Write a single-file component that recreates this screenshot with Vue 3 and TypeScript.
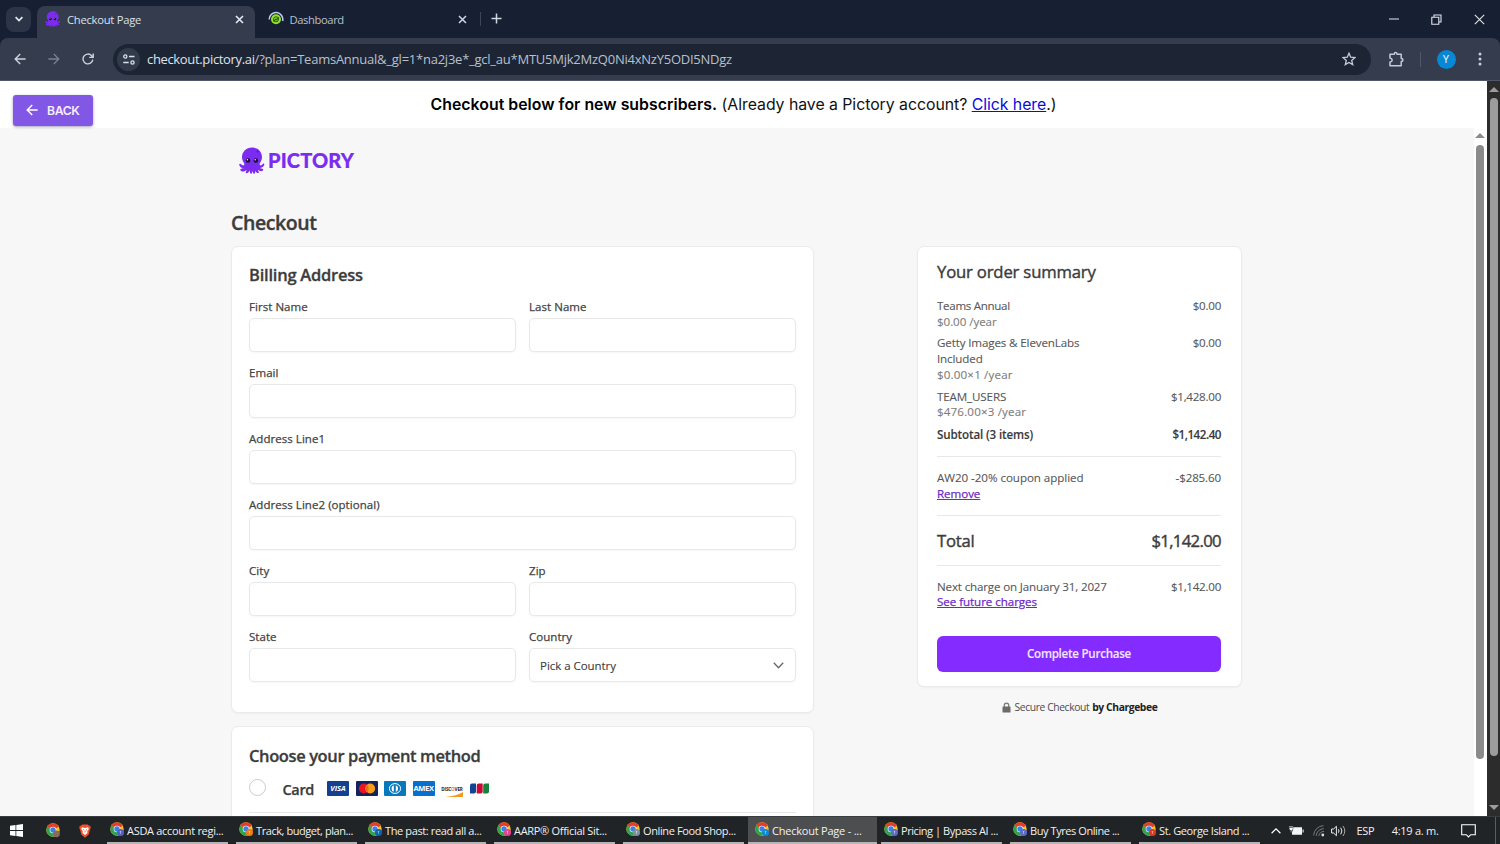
<script setup lang="ts">
interface Task { label: string; badge: string; active?: boolean }
interface Line { name: string[]; sub: string; price: string; kind: string }
interface Field { label: string; wide: boolean }

const tasks: Task[] = [
  { label: 'ASDA account regi...', badge: '#5360c4' },
  { label: 'Track, budget, plan...', badge: '#f07a1a' },
  { label: 'The past: read all a...', badge: '#0f62ae' },
  { label: 'AARP® Official Sit...', badge: '#e8408f' },
  { label: 'Online Food Shop...', badge: '#7d929e' },
  { label: 'Checkout Page - ...', badge: '#0a8bd8', active: true },
  { label: 'Pricing | Bypass AI ...', badge: '#5c6bc8' },
  { label: 'Buy Tyres Online ...', badge: '#5c6bc8' },
  { label: 'St. George Island ...', badge: '#d93a20' },
]
const lines: Line[] = [
  { name: ['Teams Annual'], sub: '$0.00 /year', price: '$0.00', kind: 'plan' },
  { name: ['Getty Images & ElevenLabs', 'Included'], sub: '$0.00×1 /year', price: '$0.00', kind: 'addon' },
  { name: ['TEAM_USERS'], sub: '$476.00×3 /year', price: '$1,428.00', kind: 'addon' },
]
const fields: Field[] = [
  { label: 'First Name', wide: false },
  { label: 'Last Name', wide: false },
  { label: 'Email', wide: true },
  { label: 'Address Line1', wide: true },
  { label: 'Address Line2 (optional)', wide: true },
  { label: 'City', wide: false },
  { label: 'Zip', wide: false },
  { label: 'State', wide: false },
]
</script>

<template>
  <div class="screen">
    <header class="tabs">
      <div class="tabmenu"><svg width="10" height="10" viewBox="0 0 10 10"><path d="M1.6 3.2 5 6.6 8.4 3.2" fill="none" stroke="#e4e8f0" stroke-width="1.7" /></svg></div>
      <div class="tab current">
        <svg class="fav" width="16" height="16" viewBox="0 0 27 27"><use href="#octo" /></svg>
        <span class="tabname one">Checkout Page</span>
        <svg class="x" width="9" height="9" viewBox="0 0 9 9"><path d="M1 1 8 8M8 1 1 8" stroke="#e6eaf2" stroke-width="1.6" /></svg>
      </div>
      <div class="tab other">
        <svg class="fav" width="16" height="16" viewBox="0 0 16 16">
          <path d="M1.2 8.6A6.8 6.8 0 1 1 14.6 10" fill="none" stroke="#bccdf4" stroke-width="1.5" />
          <circle cx="8" cy="8.3" r="5" fill="#91e02c" /><circle cx="8" cy="8.300" r="2.500" fill="none" stroke="#2c5417" stroke-width="1" /><path d="M5.300 10.200 8 8.200l.8.5 2-2.300" fill="none" stroke="#2c5417" stroke-width="1.100" />
        </svg>
        <span class="tabname two">Dashboard</span>
        <svg class="x" width="9" height="9" viewBox="0 0 9 9"><path d="M1 1 8 8M8 1 1 8" stroke="#d0d6e2" stroke-width="1.5" /></svg>
      </div>
      <i class="tabsep"></i>
      <svg class="plus" width="11" height="11" viewBox="0 0 11 11"><path d="M5.500.5v10M.5 5.500h10" stroke="#d0d6e2" stroke-width="1.500" /></svg>
      <div class="winbtns">
        <svg width="10" height="10" viewBox="0 0 10 10"><path d="M0 5h10" stroke="#a9afba" stroke-width="1.400" /></svg>
        <svg width="11" height="11" viewBox="0 0 11 11"><path d="M.8 3.200h7v7h-7zM3 3V1h7v7H8" fill="none" stroke="#e2e5eb" stroke-width="1.100" /></svg>
        <svg width="11" height="11" viewBox="0 0 11 11"><path d="M.8.8l9.400 9.400M10.200.8.8 10.200" stroke="#e2e5eb" stroke-width="1.100" /></svg>
      </div>
    </header>

    <div class="toolbar">
      <svg class="nav" width="12" height="12" viewBox="0 0 12 12"><path d="M11.600 6H1.200M6.200 1 1.200 6l5 5" fill="none" stroke="#ced4df" stroke-width="1.400" /></svg>
      <svg class="nav" width="12" height="12" viewBox="0 0 12 12"><path d="M.4 6h10.400M5.800 1l5 5-5 5" fill="none" stroke="#798191" stroke-width="1.300" /></svg>
      <svg class="nav" width="12" height="12" viewBox="0 0 12 12"><path d="M10.800 6.700A4.900 4.900 0 1 1 9.600 2.700L11 4.200M11.200.4v4H7.200" fill="none" stroke="#ced4df" stroke-width="1.400" /></svg>
      <div class="omni">
        <span class="site"><svg width="12" height="11" viewBox="0 0 12 11"><g fill="none" stroke="#dce1ea" stroke-width="1.300"><circle cx="2.300" cy="2.500" r="1.600" /><path d="M6 2.500h5.500M.3 8.500h5.400" /><circle cx="9.500" cy="8.500" r="1.600" /></g></svg></span>
        <span class="url"><b>checkout.pictory.ai</b>/?plan=TeamsAnnual&amp;_gl=1*na2j3e*_gcl_au*MTU5Mjk2MzQ0Ni4xNzY5ODI5NDgz</span>
        <svg class="star" width="14" height="14" viewBox="0 0 14 14"><path d="m7 1.200 1.700 4 4.300.4-3.300 2.800 1 4.200L7 10.400l-3.700 2.200 1-4.200L1 5.600l4.300-.4z" fill="none" stroke="#c3cada" stroke-width="1.300" /></svg>
      </div>
      <svg class="ext" width="17" height="17" viewBox="0 0 17 17"><path d="M2 3.200h4.300c0-2.200 2.700-2.200 2.700 0h4.200v4.200c2.300.1 2.300 2.900 0 3v4.400H2v-3.700c2.900-.5 2.900-3.700 0-4.200z" fill="none" stroke="#c3cada" stroke-width="1.500" stroke-linejoin="round" /></svg>
      <i class="toolsep"></i>
      <span class="avatar">Y</span>
      <svg class="dots" width="4" height="14" viewBox="0 0 4 14"><g fill="#c9cfdb"><circle cx="2" cy="2" r="1.500" /><circle cx="2" cy="7" r="1.500" /><circle cx="2" cy="12" r="1.500" /></g></svg>
    </div>

    <div class="viewport">
      <div class="page">
        <div class="notice">
          <button class="back"><svg width="12" height="12" viewBox="0 0 12 12"><path d="M11.600 6H1.200M6.200 1 1.200 6l5 5" fill="none" stroke="#fff" stroke-width="1.400" /></svg><span>BACK</span></button>
          <p><strong>Checkout below for new subscribers.</strong> <span class="ask">(Already have a Pictory account? </span><a>Click here</a><span>.)</span></p>
        </div>
        <div class="frame">
          <main>
            <div class="logo">
              <svg width="27" height="27" viewBox="0 0 27 27">
                <defs>
                  <g id="octo">
                    <path d="M13.300.6C6.700.6 3 5.200 3 10.300c0 2.900 1.500 4.700 2.200 6.300.6 1.500-.7 2.300-2.100 1.500-.9-.6-1.100-1.600-2.200-1.400-1 .3-.7 2 .3 3 .8.9 2.100 1.500 3.500 1.400-1.100.7-2.200.5-3.100 1-.8.700.1 2.100 1.500 2.300 2 .300 3.500-.600 4.500-1.500-.100 1.300-1.300 2.100-.700 3.100.8.900 2.800-.3 3.900-2.400.2 1.300 0 2.900 1.200 3.100 1.100.1 1.300-1.500 1.300-3 .6 1.400.8 3.200 2 3.100 1.100-.2.900-1.800.8-3.100 1.100 1.600 2.500 2.900 3.500 2.200.8-.7-.4-1.800-.8-3.100 1.200.900 2.700 1.700 4.300 1.200 1-.3 1.500-1.400.7-2-.8-.6-1.800-.3-2.900-1 1.600 0 3-.8 3.800-1.900.7-1 .8-2.400 0-2.600-1-.2-1.100 1-2 1.600-1.400.8-2.500-.2-1.900-1.700.7-1.600 2.200-3.400 2.200-6.200C22.900 4.800 19.300.6 13.300.6z" fill="#7b2cf0" />
                    <circle cx="9" cy="13.500" r="2.300" fill="#1c1033" /><circle cx="16.800" cy="13.500" r="2.300" fill="#1c1033" />
                    <circle cx="8.400" cy="12.800" r=".7" fill="#fff" /><circle cx="16.200" cy="12.800" r=".7" fill="#fff" />
                    <circle cx="18.500" cy="4.500" r="1" fill="#5a14bd" />
                  </g>
                </defs>
                <use href="#octo" />
              </svg>
              <span>PICTORY</span>
            </div>
            <h1>Checkout</h1>
            <div class="cols">
              <div class="left">
                <section class="card billing">
                  <h2>Billing Address</h2>
                  <div class="form">
                    <div v-for="f in fields" :key="f.label" class="field" :class="{ wide: f.wide }">
                      <label>{{ f.label }}</label><div class="input"></div>
                    </div>
                    <div class="field"><label>Country</label>
                      <div class="input select"><span>Pick a Country</span><svg width="11" height="7" viewBox="0 0 11 7"><path d="M.8.8 5.500 5.700 10.200.8" fill="none" stroke="#666" stroke-width="1.300" /></svg></div>
                    </div>
                  </div>
                </section>
                <section class="card pay">
                  <h2>Choose your payment method</h2>
                  <div class="method">
                    <i class="radio"></i><b>Card</b>
                    <div class="brands">
                      <span class="brand visa">VISA</span>
                      <span class="brand mc"><svg width="22" height="15" viewBox="0 0 22 15"><circle cx="7.800" cy="7.500" r="4.900" fill="#ea1520" /><circle cx="14.200" cy="7.500" r="4.900" fill="#f79e1b" /><path d="M11 3.800a4.900 4.900 0 0 1 0 7.400 4.900 4.900 0 0 1 0-7.400" fill="#f46a18" /></svg></span>
                      <span class="brand diners"><svg width="22" height="15" viewBox="0 0 22 15"><ellipse cx="11" cy="7.500" rx="5.600" ry="4.900" fill="none" stroke="#fff" stroke-width="1" /><path d="M9.800 4.200a3.500 3.500 0 0 0 0 6.600zM11.800 4.200a3.500 3.500 0 0 1 0 6.600z" fill="#fff" /></svg></span>
                      <span class="brand amex">AMEX</span>
                      <span class="brand disc"><span>DISC<em>O</em>VER</span><svg width="18" height="5" viewBox="0 0 18 5"><path d="M0 5Q12 4 18 0v5z" fill="#f49a24" /></svg></span>
                      <svg class="jcb" width="19" height="11" viewBox="0 0 19 11"><path d="M2 .5h4v8q0 2-2 2H0v-8q0-2 2-2" fill="#124495" /><path d="M8.700.5h4v8q0 2-2 2h-4v-8q0-2 2-2" fill="#c40c37" /><path d="M15.200.5H19v8q0 2-2 2h-3.800v-8q0-2 2-2" fill="#16833b" /></svg>
                    </div>
                  </div>
                </section>
              </div>
              <aside>
                <section class="card summary">
                  <h3>Your order summary</h3>
                  <div v-for="l in lines" :key="l.name[0]" class="line" :class="l.kind">
                    <div><div v-for="n in l.name" :key="n">{{ n }}</div><div class="sub">{{ l.sub }}</div></div>
                    <span class="amt">{{ l.price }}</span>
                  </div>
                  <div class="line subtotal"><span>Subtotal (3 items)</span><span class="amt">$1,142.40</span></div>
                  <div class="line coupon"><div><span>AW20 -20% coupon applied</span><br /><a>Remove</a></div><span class="amt">-$285.60</span></div>
                  <div class="total"><span>Total</span><span class="sum">$1,142.00</span></div>
                  <div class="line next"><div><span>Next charge on January 31, 2027</span><br /><a>See future charges</a></div><span class="amt">$1,142.00</span></div>
                  <button class="buy">Complete Purchase</button>
                </section>
                <p class="secure"><svg width="9" height="11" viewBox="0 0 9 11"><path d="M2.300 5V3.300a2.200 2.200 0 0 1 4.400 0V5" fill="none" stroke="#777" stroke-width="1.200" /><rect x=".5" y="4.500" width="8" height="6" rx=".6" fill="#6b6b6b" /></svg><span>Secure Checkout</span><b>by Chargebee</b></p>
              </aside>
            </div>
          </main>
          <div class="inner-scroll"><i class="up"></i><i class="thumb"></i></div>
        </div>
      </div>
      <div class="outer-scroll"><i class="up"></i><i class="thumb"></i><i class="down"></i></div>
    </div>

    <footer class="taskbar">
      <svg class="symbols">
        <defs>
          <g id="chrome">
            <circle cx="7" cy="7" r="6.700" fill="#f9c22e" />
            <path d="M7 7 1.200 3.650A6.700 6.700 0 0 1 12.800 3.650z" fill="#e33e2b" /><path d="M1.200 3.650A6.700 6.700 0 0 0 7 13.700L10 8.700 7 7z" fill="#2fa34f" />
            <circle cx="7" cy="7" r="3.300" fill="#fff" /><circle cx="7" cy="7" r="2.700" fill="#3f7fe8" />
          </g>
        </defs>
      </svg>
      <svg class="win" width="13" height="13" viewBox="0 0 13 13"><path d="M0 1.800 5.500 1v5H0zM6.300.9 13 0v6H6.300zM0 6.900h5.500v5L0 11.200zM6.300 6.900H13v6.100l-6.700-.9z" fill="#fff" /></svg>
      <svg class="pin" width="15" height="15" viewBox="0 0 15 15"><use href="#chrome" /><circle cx="10.500" cy="10.800" r="3.400" fill="#8a6a5c" /></svg>
      <svg class="brave" width="12" height="14" viewBox="0 0 12 14"><path d="M3.300.4h5.400l1.300 1.300h1.200l.6 2.400-.8 1.300-1.200 5L6 13.700l-3.800-3.300-1.200-5-.8-1.300L.8 1.700H2z" fill="#f0502a" /><path d="M3 3.300 6 3.900l3-.6.8 1.800-1.500 2L8.400 9 6 11 3.600 9l.1-1.900-1.500-2z" fill="#fff" /><path d="M4 5.600l1.200.5M8 5.600l-1.200.5M6 6.500v2" stroke="#f0502a" stroke-width=".8" /></svg>
      <div class="tasks">
        <div v-for="t in tasks" :key="t.label" class="task" :class="{ active: t.active }">
          <svg width="15" height="15" viewBox="0 0 15 15"><use href="#chrome" /><circle cx="10.500" cy="10.500" r="3.500" :fill="t.badge" /><path d="M9.700 9.400h1.600M10.500 9.400v2.400" stroke="#fff" stroke-opacity=".55" stroke-width=".8" /></svg>
          <span>{{ t.label }}</span>
        </div>
      </div>
      <div class="tray">
        <svg class="chev" width="10" height="6" viewBox="0 0 10 6"><path d="M.6 5.200 5 .9l4.400 4.300" fill="none" stroke="#fff" stroke-width="1.200" /></svg>
        <svg class="bat" width="15" height="10" viewBox="0 0 15 10"><path d="M3.600 1.200H13v7.600H3V5.500h.6zM13.600 3.500h1v3h-1z" fill="#f4f4f4" /><path d="M1 0v1.500M3 0v1.500" stroke="#f4f4f4" /><path d="M.2 1.500h3.900V3.300L2.600 4.600v1.600H1.700V4.600L.2 3.300z" fill="#f4f4f4" stroke="#202426" stroke-width=".4" /></svg>
        <svg class="wifi" width="12" height="12" viewBox="0 0 12 12"><g fill="none" stroke="#777a7c" stroke-width="1"><path d="M.6 10.500A10.200 10.200 0 0 1 10.500.7M3.200 10.800A7.500 7.500 0 0 1 10.800 3.700M5.800 11A5 5 0 0 1 11 6.400" /></g><circle cx="9.800" cy="10" r="1.400" fill="#ddd" /></svg>
        <svg class="vol" width="15" height="12" viewBox="0 0 15 12"><g fill="none" stroke="#eee" stroke-width="1"><path d="M.6 4h2L5.400 1.300v9.400L2.600 8h-2z" /><path d="M7.400 4.300q1.200 1.700 0 3.400M9.700 2.700q2.400 3.300 0 6.600" /><path d="M12 1q3.600 5 0 10" stroke="#aaa" /></g></svg>
        <span class="lang">ESP</span><span class="clock">4:19 a. m.</span>
        <svg class="note" width="15" height="14" viewBox="0 0 15 14"><path d="M.7.700h13.600v10H9.700L7.500 13l-2.200-2.300H.7z" fill="none" stroke="#fff" stroke-width="1.100" /></svg>
        <i class="desk"></i>
      </div>
    </footer>
  </div>
</template>

<style>
html, body { margin: 0; overflow: hidden; }
</style>

<style scoped>
* { box-sizing: border-box; }
.screen { width: 1500px; height: 844px; display: flex; flex-direction: column; overflow: hidden; font-family: "Open Sans", "Noto Sans", sans-serif; font-size: 11.5px; color: #3c3c3c; }
svg { display: block; flex: none; }
.symbols { display: none; }
p, h1, h2, h3 { margin: 0; }
button { border: 0; font: inherit; padding: 0; }

.tabs { height: 38px; flex: none; background: #171f32; display: flex; align-items: center; padding-left: 6px; }
.tabmenu { width: 25px; height: 25px; border-radius: 8px; background: #2c3447; display: grid; place-items: center; }
.tab { display: flex; align-items: center; height: 32px; align-self: flex-end; font-size: 11.2px; }
.current { width: 218px; margin-left: 6px; padding: 0 11px 0 8px; background: #343c4e; border-radius: 8px 8px 0 0; color: #dde1ea; }
.other { width: 212px; padding-left: 12.5px; color: #b9c0ce; }
.fav { margin-top: -6px; }
.tabname { flex: 1; padding-left: 6px; margin-top: -5px; white-space: nowrap; }
.one { letter-spacing: -.24px; }
.two { letter-spacing: -.38px; }
.x { margin-top: -5px; }
.tabsep { width: 1px; height: 14px; background: #3d4658; margin-left: 12.5px; }
.plus { margin-left: 10px; margin-top: -2px; }
.winbtns { margin-left: auto; display: flex; align-items: center; gap: 32px; padding-right: 15.5px; }

.toolbar { height: 43px; flex: none; background: #343c4e; border-bottom: 1px solid #50576a; border-radius: 8px 8px 0 0; box-shadow: 0 -8px 0 #171f32; clip-path: inset(0); display: flex; align-items: center; padding: 0 18px 0 14px; }
.nav { margin-right: 22px; }
.omni { width: 1258px; height: 31px; margin-left: -3px; border-radius: 16px; background: #1d2535; display: flex; align-items: center; padding: 0 15.5px 0 4px; }
.site { width: 23px; height: 23px; border-radius: 50%; background: #323b4c; display: grid; place-items: center; }
.url { flex: 1; padding-left: 7px; margin-top: -1px; font-size: 13px; letter-spacing: -.24px; color: #b9c0cc; white-space: nowrap; }
.url b { font-weight: 400; color: #dfe3ea; letter-spacing: -.34px; }
.ext { margin-left: 17px; }
.toolsep { width: 1px; height: 15px; background: #50586b; margin-left: 15px; }
.avatar { width: 19px; height: 19px; border-radius: 50%; background: #0788d5; color: #e8f4fc; margin-left: 15.5px; font: 10.5px/19px Roboto, sans-serif; text-align: center; }
.dots { margin-left: auto; }

.viewport { flex: 1; display: flex; min-height: 0; background: #171f32; }
.page { width: 1487px; display: flex; flex-direction: column; background: #fff; }
.notice { height: 47px; flex: none; position: relative; text-align: center; font: 15.85px/47px Inter, sans-serif; color: #111; }
.notice p { height: 47px; }
.notice strong { font-weight: 600; color: #000; letter-spacing: .03px; }
.notice .ask { letter-spacing: -.04px; }
.notice a { color: #0b0be0; text-decoration: underline; letter-spacing: -.05px; }
.back { position: absolute; left: 13px; top: 14px; width: 80px; height: 31px; border-radius: 3px; background: #8257e5; color: #f6f0ff; display: flex; align-items: center; gap: 9px; padding: 0 0 1px 13px; font: 600 12.2px Inter, sans-serif; letter-spacing: -.35px; box-shadow: 0 1px 3px rgba(60, 40, 110, .45); }
.frame { flex: 1; display: flex; background: #f7f7f7; min-height: 0; overflow: hidden; }
main { width: 1474px; padding: 19px 0 0 231px; }
.inner-scroll { width: 13px; background: #fff; display: flex; flex-direction: column; align-items: center; padding: 5px 1px 0 0; }
.up { border: 5px solid transparent; border-top-width: 0; border-bottom-color: #8b8b8b; }
.inner-scroll .thumb { width: 8px; height: 614px; margin-top: 7px; border-radius: 4px; background: #8b8b8b; }
.outer-scroll { width: 13px; background: #2c2c2c; display: flex; flex-direction: column; align-items: center; padding-top: 6px; }
.outer-scroll .up { border-bottom-color: #9c9c9c; }
.outer-scroll .thumb { width: 8px; height: 658px; margin-top: 6px; border-radius: 4px; background: #9c9c9c; }
.down { border: 5px solid transparent; border-bottom-width: 0; border-top-color: #9c9c9c; margin-top: 49px; }

.logo { display: flex; align-items: center; height: 27px; padding-left: 7.5px; font: 900 20px/27px Lato, sans-serif; color: #7a2df0; gap: 2.5px; letter-spacing: .12px; -webkit-text-stroke: .2px currentColor; }
h1 { font-size: 19.5px; font-weight: 600; line-height: 27px; height: 28px; margin-top: 35px; letter-spacing: -.4px; -webkit-text-stroke: .35px currentColor; }
.cols { display: flex; gap: 103px; margin-top: 9px; }
.left { width: 583px; }
.card { background: #fff; border: 1px solid #ebebeb; border-radius: 7px; box-shadow: 0 1px 2px rgba(0, 0, 0, .04); }
.billing { height: 467px; padding: 16px 17px; }
h2 { font-size: 16.5px; font-weight: 600; line-height: 24px; letter-spacing: -.23px; -webkit-text-stroke: .3px currentColor; }
.form { display: grid; grid-template-columns: 267px 267px; column-gap: 13px; grid-auto-rows: 66.15px; margin-top: 11px; }
.field { margin-top: -.5px; }
.wide { grid-column: span 2; }
label { display: block; height: 20px; line-height: 18px; font-size: 11.5px; color: #434343; letter-spacing: .05px; -webkit-text-stroke: .25px currentColor; }
.input { height: 34px; border: 1px solid #e8e8e8; border-radius: 5px; background: #fff; box-shadow: 0 1px 2px rgba(0, 0, 0, .04); }
.select { display: flex; align-items: center; justify-content: space-between; padding: 0 11px 0 10px; -webkit-text-stroke: .1px currentColor; letter-spacing: -.04px; }
.pay { height: 160px; margin-top: 13px; padding: 17px; }
.pay h2 { letter-spacing: -.39px; }
.method { display: flex; height: 44px; border-bottom: 1px solid #e6e6e6; margin-top: 1px; padding-top: 11px; }
.radio { width: 17px; height: 17px; border: 1px solid #cbcbcf; border-radius: 50%; margin-top: -1px; }
.method b { margin: 1px 0 0 16.5px; font-size: 14.5px; font-weight: 600; line-height: 18px; width: 44.5px; letter-spacing: -.35px; -webkit-text-stroke: .25px currentColor; }
.brands { display: flex; gap: 6.5px; padding-top: .6px; }
.brand { width: 22px; height: 15px; border-radius: 1px; display: flex; align-items: center; justify-content: center; color: #fff; font: 700 7.5px/15px "Open Sans", sans-serif; }
.visa { background: #134090; font-style: italic; }
.mc { background: #12235f; }
.diners { background: #0878bd; }
.amex { background: #0670cf; letter-spacing: -.3px; }
.disc { flex-direction: column; justify-content: flex-start; padding-top: 6px; font: 700 4.6px/5px "Open Sans", sans-serif; letter-spacing: -.15px; color: #222; }
.disc em { color: #ef7a1b; font-style: normal; }
.disc svg { margin-left: 3px; }
.jcb { margin-top: 2px; }

.summary { width: 325px; height: 441px; padding: 13px 20px 0 19px; font-size: 11.6px; line-height: 15.7px; color: #575757; letter-spacing: -.13px; -webkit-text-stroke: .1px currentColor; }
h3 { font-size: 16.7px; font-weight: 400; line-height: 23px; color: #3c3c3c; margin-bottom: 15px; letter-spacing: -.18px; -webkit-text-stroke: .4px currentColor; }
.line { display: flex; justify-content: space-between; margin-bottom: 6px; }
.line.plan { letter-spacing: -.32px; }
.line .amt { letter-spacing: -.26px; }
.sub { color: #7c7c7c; letter-spacing: .16px; }
.plan .sub { letter-spacing: -.06px; }
.subtotal { font-weight: 600; color: #3a3a3a; padding-bottom: 13.5px; border-bottom: 1px solid #e8e8e8; margin: 7px 0 13px; }
.subtotal .amt { letter-spacing: -.46px; }
.summary a { color: #6e2bc4; text-decoration: underline; letter-spacing: -.06px; -webkit-text-stroke: .25px currentColor; }
.coupon { padding-bottom: 13px; border-bottom: 1px solid #e8e8e8; margin: 0; letter-spacing: -.05px; }
.coupon .amt { letter-spacing: -.14px; }
.total { display: flex; justify-content: space-between; font-size: 16.7px; line-height: 49px; height: 50px; border-bottom: 1px solid #e8e8e8; margin-bottom: 13px; color: #3c3c3c; -webkit-text-stroke: .4px currentColor; letter-spacing: -.25px; }
.total .sum { letter-spacing: -.66px; }
.next { margin: 0; letter-spacing: -.16px; }
.buy { display: block; width: 284px; height: 36px; margin-top: 26px; border-radius: 6px; background: #842cff; color: #f1e6ff; font-weight: 600; font-size: 11.6px; letter-spacing: -.27px; }
.secure { display: flex; justify-content: center; align-items: center; gap: 3px; font-size: 10.3px; letter-spacing: -.39px; height: 16px; margin-top: 12px; color: #4c4c4c; }
.secure span { margin-left: 1px; }
.secure b { color: #222; }

.taskbar { height: 28px; flex: none; background: #202426; border-top: 1px solid #3a3d3f; display: flex; align-items: center; color: #f1f1f1; font-size: 11px; letter-spacing: -.38px; }
.win { margin-left: 10px; }
.pin { margin-left: 23px; }
.brave { margin-left: 18px; margin-right: 16px; }
.tasks { display: flex; height: 27px; gap: 8px; }
.task { width: 121px; display: flex; align-items: center; border-bottom: 2px solid #b5b5b5; padding-left: 3px; gap: 2px; white-space: nowrap; }
.task span { padding-top: 1px; }
.task:nth-child(1), .task:nth-child(4) { letter-spacing: -.3px; }
.task:nth-child(2), .task:nth-child(7), .task:nth-child(8) { letter-spacing: -.43px; }
.task.active { background: #4c4e4f; width: 129px; margin: 0 -4px; padding-left: 7px; letter-spacing: -.22px; }
.tray { flex: 1; display: flex; align-items: center; height: 27px; }
.chev { margin-left: 10.5px; }
.bat { margin-left: 8.5px; }
.wifi { margin-left: 9px; }
.vol { margin-left: 6px; }
.lang { margin-left: 10.5px; }
.clock { margin-left: 17.5px; letter-spacing: -.25px; }
.note { margin-left: auto; }
.desk { width: 1px; height: 27px; background: #5b5e60; margin: 0 4px 0 19px; }
</style>
